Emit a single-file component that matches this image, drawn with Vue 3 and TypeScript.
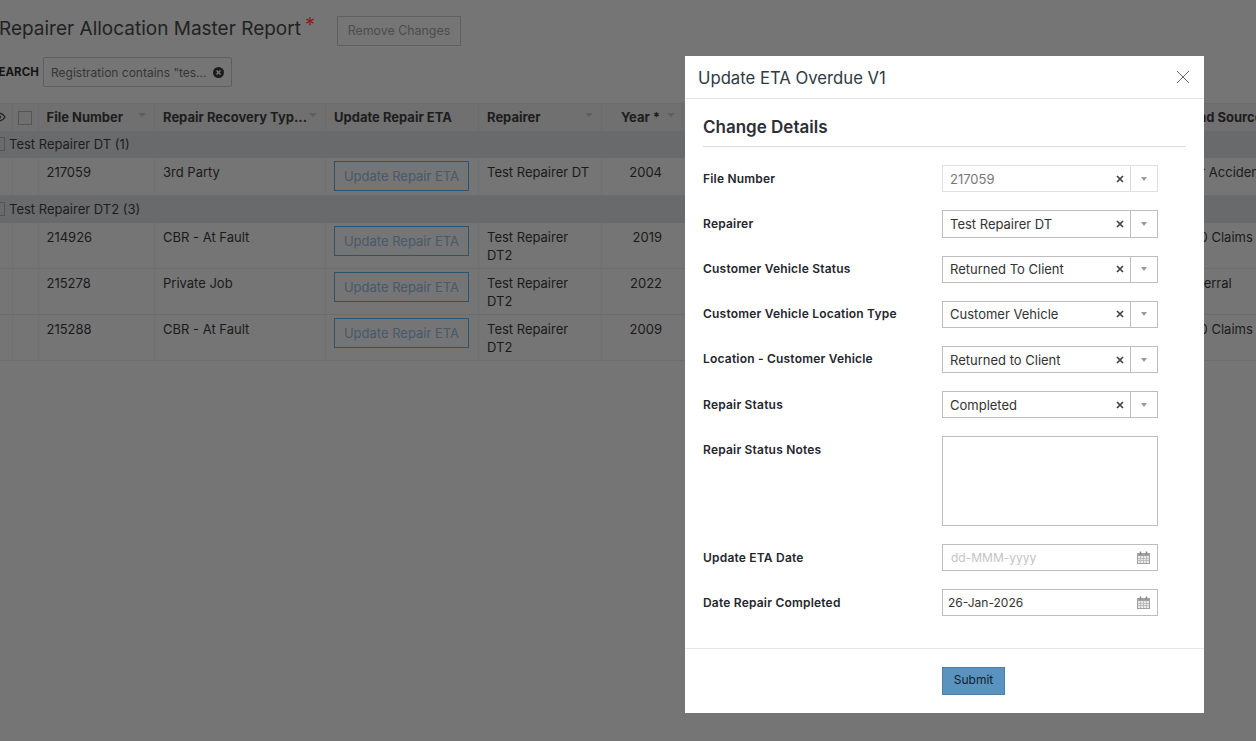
<script setup lang="ts">
interface Row { file: string; type: string; repairer: string; year: string; source: string }
interface Group { name: string; count: number; rows: Row[] }
interface Field { label: string; value: string; disabled?: boolean }

const groups: Group[] = [
  { name: 'Test Repairer DT', count: 1, rows: [
    { file: '217059', type: '3rd Party', repairer: 'Test Repairer DT', year: '2004', source: 'Car Accident' },
  ] },
  { name: 'Test Repairer DT2', count: 3, rows: [
    { file: '214926', type: 'CBR - At Fault', repairer: 'Test Repairer DT2', year: '2019', source: '360 Claims' },
    { file: '215278', type: 'Private Job', repairer: 'Test Repairer DT2', year: '2022', source: 'Referral' },
    { file: '215288', type: 'CBR - At Fault', repairer: 'Test Repairer DT2', year: '2009', source: '360 Claims' },
  ] },
]

const selects: Field[] = [
  { label: 'File Number', value: '217059', disabled: true },
  { label: 'Repairer', value: 'Test Repairer DT' },
  { label: 'Customer Vehicle Status', value: 'Returned To Client' },
  { label: 'Customer Vehicle Location Type', value: 'Customer Vehicle' },
  { label: 'Location - Customer Vehicle', value: 'Returned to Client' },
  { label: 'Repair Status', value: 'Completed' },
]
</script>

<template>
  <div class="screen">
    <main class="page">
      <div class="title-row">
        <h1 class="title">Repairer Allocation Master Report</h1>
        <span class="star">*</span>
        <button class="remove-btn">Remove Changes</button>
      </div>
      <div class="search-row">
        <span class="search-label">SEARCH</span>
        <span class="chip">
          <span>Registration contains "tes...</span>
          <svg class="chip-x" width="11" height="11" viewBox="0 0 10 10">
            <circle cx="5" cy="5" r="5" fill="#1d1d1d" />
            <path d="M3.200 3.200l3.600 3.600M6.800 3.200l-3.600 3.600" stroke="#757575" stroke-width="1.400" />
          </svg>
        </span>
      </div>
      <table class="grid">
        <colgroup>
          <col class="c-eye" /><col class="c-check" /><col class="c-file" /><col class="c-type" />
          <col class="c-update" /><col class="c-rep" /><col class="c-year" /><col class="c-hidden" /><col class="c-source" />
        </colgroup>
        <thead>
          <tr>
            <th>
              <svg class="eye" width="14" height="10" viewBox="0 0 14 10">
                <path d="M1 5c1.600-2.600 3.600-4 6-4s4.400 1.400 6 4c-1.600 2.600-3.600 4-6 4S2.600 7.600 1 5z" fill="none" stroke="#1f1f1f" stroke-width="1.300" />
                <circle cx="7" cy="5" r="2" fill="#1f1f1f" />
              </svg>
            </th>
            <th class="center"><span class="check"></span></th>
            <th><span class="th-in">File Number<i class="caret"></i></span></th>
            <th><span class="th-in">Repair Recovery Typ...<i class="caret"></i></span></th>
            <th>Update Repair ETA</th>
            <th><span class="th-in">Repairer<i class="caret"></i></span></th>
            <th><span class="th-in year-head">Year *<i class="caret"></i></span></th>
            <th></th>
            <th>Lead Source</th>
          </tr>
        </thead>
        <tbody v-for="g in groups" :key="g.name">
          <tr class="group">
            <td colspan="9">
              <span class="group-in"><span class="check group-check"></span>{{ g.name }} ({{ g.count }})</span>
            </td>
          </tr>
          <tr v-for="r in g.rows" :key="r.file">
            <td></td>
            <td></td>
            <td>{{ r.file }}</td>
            <td>{{ r.type }}</td>
            <td class="btn-cell"><button class="eta-btn">Update Repair ETA</button></td>
            <td>{{ r.repairer }}</td>
            <td class="year">{{ r.year }}</td>
            <td></td>
            <td class="nowrap">{{ r.source }}</td>
          </tr>
        </tbody>
      </table>
    </main>

    <section class="modal">
      <header class="modal-head">
        <h2>Update ETA Overdue V1</h2>
        <svg class="close" width="14" height="14" viewBox="0 0 14 14">
          <path d="M1 1l12 12M13 1L1 13" stroke="#5a6e7d" stroke-width="1" fill="none" />
        </svg>
      </header>
      <div class="modal-body">
        <h3>Change Details</h3>
        <div class="form">
          <div v-for="f in selects" :key="f.label" class="field">
            <label>{{ f.label }}</label>
            <div class="select" :class="{ disabled: f.disabled }">
              <span class="select-val">{{ f.value }}</span>
              <svg class="sel-x" width="8" height="8" viewBox="0 0 8 8">
                <path d="M1 1l6 6M7 1L1 7" stroke="#444" stroke-width="1.700" />
              </svg>
              <span class="sel-arrow"><i></i></span>
            </div>
          </div>
          <div class="field">
            <label>Repair Status Notes</label>
            <div class="notes"></div>
          </div>
          <div class="field">
            <label>Update ETA Date</label>
            <div class="date">
              <span class="placeholder">dd-MMM-yyyy</span>
              <svg width="13" height="13" viewBox="0 0 13 13">
                <rect x="0.500" y="2.500" width="12" height="10" fill="#e9e9e9" stroke="#a0a0a0" />
                <rect x="1" y="3" width="11" height="2" fill="#a0a0a0" />
                <path d="M3.500 0.500v3M9.500 0.500v3" stroke="#808080" stroke-width="1.400" />
                <path d="M1 7.500h11M1 9.500h11M3.500 5v7M6.500 5v7M9.500 5v7" stroke="#b0b0b0" stroke-width="0.700" />
              </svg>
            </div>
          </div>
          <div class="field">
            <label>Date Repair Completed</label>
            <div class="date filled">
              <span>26-Jan-2026</span>
              <svg width="13" height="13" viewBox="0 0 13 13">
                <rect x="0.500" y="2.500" width="12" height="10" fill="#e9e9e9" stroke="#a0a0a0" />
                <rect x="1" y="3" width="11" height="2" fill="#a0a0a0" />
                <path d="M3.500 0.500v3M9.500 0.500v3" stroke="#808080" stroke-width="1.400" />
                <path d="M1 7.500h11M1 9.500h11M3.500 5v7M6.500 5v7M9.500 5v7" stroke="#b0b0b0" stroke-width="0.700" />
              </svg>
            </div>
          </div>
        </div>
      </div>
      <footer class="modal-foot">
        <button class="submit">Submit</button>
      </footer>
    </section>
  </div>
</template>

<style>
html, body { margin: 0; padding: 0; overflow: hidden; }
</style>

<style scoped>
.screen {
  position: relative;
  width: 1256px;
  height: 741px;
  overflow: hidden;
  background: #757575;
  font-family: Inter, "Open Sans", sans-serif;
  font-size: 13px;
  color: #1c1c1c;
}
.page { margin-left: -30px; width: 1500px; }
.title-row { display: flex; align-items: flex-start; height: 57px; padding: 16px 0 0 29px; box-sizing: border-box; }
.title { margin: 0; font-size: 19px; font-weight: 400; line-height: 26px; color: #222; white-space: nowrap; }
.star { color: #8a1c1c; font-size: 20px; line-height: 18px; margin-left: 4px; }
.remove-btn {
  margin-left: 22px; height: 30px; width: 124px; padding: 0 0 2px;
  background: transparent; border: 1px solid #5f5f5f; color: #4c4c4c;
  font: 400 12.400px Inter, sans-serif;
}
.search-row { display: flex; align-items: center; height: 30px; margin-bottom: 16px; padding-left: 21px; }
.search-label { width: 52px; font-size: 11.500px; font-weight: 700; color: #141414; text-align: left; white-space: nowrap; }
.chip {
  display: flex; align-items: center; justify-content: space-between; box-sizing: border-box;
  width: 189px; height: 30px; padding: 0 7px; border: 1px solid #5f5f5f; border-radius: 2px;
  color: #353535; font-size: 12px; white-space: nowrap;
}
.grid { border-collapse: collapse; table-layout: fixed; width: 1500px; }
.c-eye { width: 42px; } .c-check { width: 26px; } .c-file { width: 116.500px; } .c-type { width: 171px; }
.c-update { width: 153px; } .c-rep { width: 123px; } .c-year { width: 81px; } .c-hidden { width: 492.500px; } .c-source { width: 295px; }
th {
  height: 27px; padding: 0 8px 1px; background: #707070; text-align: left; font-size: 13px; font-weight: 700; color: #1d1d1d;
  border-top: 1px solid #6b6b6b; border-right: 1px solid #6b6b6b; white-space: nowrap; box-sizing: border-box;
}
th.center { text-align: center; padding: 0; }
.th-in { display: flex; align-items: center; justify-content: space-between; }
.year-head { justify-content: flex-start; gap: 7px; margin-left: 11px; }
.caret { display: block; width: 0; height: 0; border-left: 4px solid transparent; border-right: 4px solid transparent; border-top: 4px solid #5e5e5e; margin-top: -4px; }
.eye { display: block; margin-left: 14px; }
.check { display: inline-block; width: 12px; height: 12px; border: 1px solid #555; vertical-align: middle; }
td {
  padding: 5px 8px 4px; vertical-align: top; line-height: 18px; color: #1a1a1a;
  border-bottom: 1px solid #6c6c6c; border-right: 1px solid #707070; box-sizing: border-box; font-size: 13px;
}
.group td { height: 27px; padding: 0; background: #696a6c; border: 0; }
.group-in { display: flex; align-items: center; height: 27px; margin-left: 21px; color: #1d1d1d; white-space: nowrap; }
.group-check { margin-right: 4px; }
.btn-cell { padding: 3px 8px 4px; }
.eta-btn {
  display: block; box-sizing: border-box; width: 135px; height: 30px; padding: 0;
  background: transparent; border: 1px solid #2b556f; color: #47596a;
  font: 400 13px Inter, sans-serif; white-space: nowrap;
}
.year { text-align: right; padding-right: 20px; }
.nowrap { white-space: nowrap; }
.modal {
  position: absolute; left: 685px; top: 56px; width: 519px; height: 657px;
  background: #fff; display: flex; flex-direction: column; color: #2c2c2c;
}
.modal-head {
  display: flex; align-items: center; justify-content: space-between; box-sizing: border-box;
  height: 43px; padding: 0 14px 0 13px; border-bottom: 1px solid #e4e4e4;
}
.modal-head h2 { margin: 2px 0 0; font-size: 16.700px; font-weight: 400; color: #2d3a44; }
.close { display: block; }
.modal-body { flex: 1; padding: 18px 18px 0; }
h3 {
  margin: 0 0 18.200px; height: 30px; line-height: 20px; font-size: 17px; font-weight: 600; color: #2e2e36;
  border-bottom: 1px solid #dcdcdc; box-sizing: border-box;
}
.form { display: flex; flex-direction: column; gap: 18px; }
.field { display: flex; align-items: flex-start; }
label { width: 239px; flex: none; font-size: 12px; letter-spacing: 0.200px; font-weight: 600; line-height: 16px; padding-top: 5.500px; color: #24262e; }
.select {
  display: flex; align-items: center; box-sizing: border-box; width: 216px; height: 27.200px;
  border: 1px solid #bdbdbd; color: #333;
}
.select-val { flex: 1; padding-left: 7px; font-size: 13px; white-space: nowrap; }
.sel-x { flex: none; margin-right: 6px; }
.sel-arrow { flex: none; display: flex; align-items: center; justify-content: center; width: 27px; height: 100%; border-left: 1px solid #bdbdbd; box-sizing: border-box; }
.sel-arrow i { display: block; border-left: 3px solid transparent; border-right: 3px solid transparent; border-top: 4px solid #999; }
.select.disabled { border-color: #e0e0e0; color: #777; }
.select.disabled .sel-arrow { border-left-color: #d9d9d9; }
.notes { width: 216px; height: 90px; box-sizing: border-box; border: 1px solid #bdbdbd; }
.date {
  display: flex; align-items: center; justify-content: space-between; box-sizing: border-box;
  width: 216px; height: 27px; padding: 0 7px 0 8px; border: 1px solid #bdbdbd;
}
.placeholder { color: #c4c4c4; font-size: 12px; }
.date.filled { padding-left: 5px; font-size: 12px; color: #333; }
.date.filled span { margin-top: -1px; }
.modal-foot { display: flex; box-sizing: border-box; height: 65px; padding: 18px 0 0 257px; border-top: 1px solid #e6e6e6; }
.submit {
  width: 63px; height: 28px; padding: 0 0 3px; background: #5a93bd; border: 1px solid #4a7fa8; color: #12202b;
  font: 400 12px Inter, sans-serif;
}
</style>
